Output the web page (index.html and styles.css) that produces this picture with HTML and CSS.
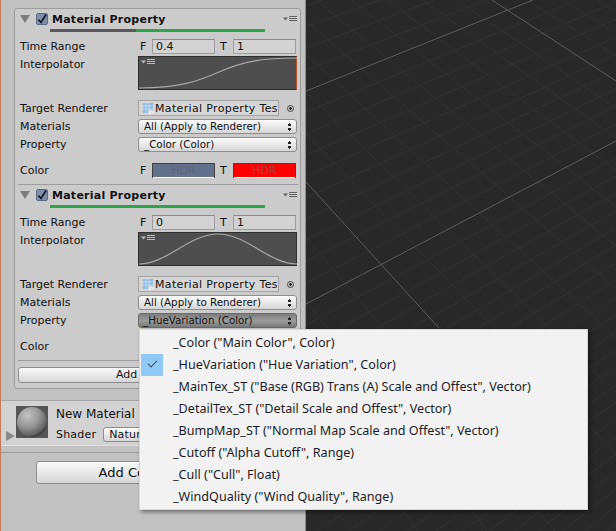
FILE: index.html
```html
<!DOCTYPE html>
<html lang="en">

<head>
    <title>Material Property</title>
    <meta charset="UTF-8">
    <link rel="stylesheet" href="styles.css">
</head>

<body>
    <div class="app">
        <aside class="inspector">
            <div class="card">
                <section class="effect">
                    <div class="effect-head">
                        <svg class="fold" width="10" height="8" viewBox="0 0 10 8"><path d="M0 0H10L5 8Z" /></svg>
                        <svg class="check" width="12" height="12" viewBox="0 0 12 12"><rect x=".5" y=".5" width="11" height="11" rx="1.5" /><path d="M2.5 6.5L5 9.5L10 1.5" /></svg>
                        <span class="effect-title">Material Property</span>
                        <svg class="menu-icon" width="14" height="6" viewBox="0 0 14 6"><path class="menu-tri" d="M0 1.5H5L2.500 4.500Z" /><path class="menu-lines" d="M6 .5H14M6 2.500H14M6 4.500H14" /></svg>
                    </div>
                    <div class="bar"><span class="bar-dark"></span><span class="bar-green"></span></div>
                    <div class="row">
                        <span class="label">Time Range</span>
                        <div class="pair">
                            <span class="pair-key">F</span><span class="num">0.4</span>
                            <span class="pair-key">T</span><span class="num">1</span>
                        </div>
                    </div>
                    <div class="row row-curve">
                        <span class="label">Interpolator</span>
                        <div class="curve curve-edge">
                            <svg class="menu-icon curve-menu" width="14" height="6" viewBox="0 0 14 6"><path class="menu-tri" d="M0 1.500H5L2.500 4.500Z" /><path class="menu-lines" d="M6 .5H14M6 2.500H14M6 4.500H14" /></svg>
                            <svg class="curve-line" width="158" height="32" viewBox="0 0 158 32"><path d="M0 31C40 31 60 24 80 15C105 4 125 1 158 1" /></svg>
                        </div>
                    </div>
                    <div class="row row-target">
                        <span class="label">Target Renderer</span>
                        <div class="object-field">
                            <svg class="object-icon" width="11" height="11" viewBox="0 0 11 11"><rect width="10" height="10" fill="#8ab8e4" /><path d="M3 0V10M6 0V10M0 3H10M0 6H10" stroke="#c4dcf2" /><ellipse cx="8" cy="9" rx="3" ry="2" fill="#e8e8e8" /></svg>
                            <span class="object-name">Material Property Test</span>
                        </div>
                        <span class="target"></span>
                    </div>
                    <div class="row">
                        <span class="label">Materials</span>
                        <div class="popup"><span>All (Apply to Renderer)</span><span class="arrows"></span></div>
                    </div>
                    <div class="row">
                        <span class="label">Property</span>
                        <div class="popup"><span>_Color (Color)</span><span class="arrows"></span></div>
                    </div>
                    <div class="row row-color">
                        <span class="label">Color</span>
                        <div class="pair">
                            <span class="pair-key">F</span><span class="swatch swatch-blue">HDR</span>
                            <span class="pair-key">T</span><span class="swatch swatch-red">HDR</span>
                        </div>
                    </div>
                </section>

                <section class="effect">
                    <div class="effect-head">
                        <svg class="fold" width="10" height="8" viewBox="0 0 10 8"><path d="M0 0H10L5 8Z" /></svg>
                        <svg class="check" width="12" height="12" viewBox="0 0 12 12"><rect x=".5" y=".5" width="11" height="11" rx="1.5" /><path d="M2.500 6.500L5 9.500L10 1.500" /></svg>
                        <span class="effect-title">Material Property</span>
                        <svg class="menu-icon" width="14" height="6" viewBox="0 0 14 6"><path class="menu-tri" d="M0 1.500H5L2.500 4.500Z" /><path class="menu-lines" d="M6 .5H14M6 2.500H14M6 4.500H14" /></svg>
                    </div>
                    <div class="bar"><span class="bar-green bar-full"></span></div>
                    <div class="row">
                        <span class="label">Time Range</span>
                        <div class="pair">
                            <span class="pair-key">F</span><span class="num">0</span>
                            <span class="pair-key">T</span><span class="num">1</span>
                        </div>
                    </div>
                    <div class="row row-curve">
                        <span class="label">Interpolator</span>
                        <div class="curve">
                            <svg class="menu-icon curve-menu" width="14" height="6" viewBox="0 0 14 6"><path class="menu-tri" d="M0 1.500H5L2.500 4.500Z" /><path class="menu-lines" d="M6 .5H14M6 2.500H14M6 4.500H14" /></svg>
                            <svg class="curve-line" width="158" height="32" viewBox="0 0 158 32"><path d="M0 31C28 31 50 1 79 1C108 1 130 31 158 31" /></svg>
                        </div>
                    </div>
                    <div class="row row-target">
                        <span class="label">Target Renderer</span>
                        <div class="object-field">
                            <svg class="object-icon" width="11" height="11" viewBox="0 0 11 11"><rect width="10" height="10" fill="#8ab8e4" /><path d="M3 0V10M6 0V10M0 3H10M0 6H10" stroke="#c4dcf2" /><ellipse cx="8" cy="9" rx="3" ry="2" fill="#e8e8e8" /></svg>
                            <span class="object-name">Material Property Test</span>
                        </div>
                        <span class="target"></span>
                    </div>
                    <div class="row">
                        <span class="label">Materials</span>
                        <div class="popup"><span>All (Apply to Renderer)</span><span class="arrows"></span></div>
                    </div>
                    <div class="row">
                        <span class="label">Property</span>
                        <div class="popup popup-open"><span>_HueVariation (Color)</span><span class="arrows"></span></div>
                    </div>
                    <div class="row row-color">
                        <span class="label">Color</span>
                    </div>
                </section>

                <div class="add-row"><div class="add-btn">Add</div></div>
            </div>

            <div class="material">
                <div class="preview"><span class="sphere"></span></div>
                <svg class="material-fold" width="9" height="10" viewBox="0 0 9 10"><path d="M0 0L9 5L0 10Z" /></svg>
                <div class="material-info">
                    <span class="material-name">New Material</span>
                    <div class="shader"><span>Shader</span><span class="shader-popup">Natur</span></div>
                </div>
            </div>
            <div class="inspector-rule"></div>
            <div class="add-component">Add Component</div>
        </aside>

        <main class="scene">
            <svg width="310" height="531" viewBox="306 0 310 531">
                <path class="grid-minor" d="M306 6L616 -103M306 27L616 -85M306 48L616 -68M306 70L616 -50M306 112L616 -16M306 134L616 2M306 155L616 19M306 176L616 37M306 198L616 54M306 219L616 71M306 240L616 89M306 261L616 106M306 283L616 124M306 325L616 158M306 347L616 176M306 368L616 193M306 389L616 211M306 411L616 228M306 432L616 245M306 453L616 263M306 474L616 280M306 496L616 298M306 517L616 315M306 538L616 332M306 560L616 350M306 581L616 367M306 602L616 385M306 624L616 402M306 645L616 419M306 666L616 437M306 688L616 454M306 709L616 471M306 730L616 489M306 752L616 506M306 773L616 524" />
                <path class="grid-minor" d="M0 0L350 531M35 0L418 531M70 0L487 531M105 0L555 531M176 0L691 531M211 0L759 531M246 0L828 531M282 0L896 531M316 0L964 531M351 0L1032 531M387 0L1100 531M422 0L1169 531M457 0L1237 531M527 0L1373 531M562 0L1441 531M597 0L1510 531" />
                <path class="grid-major" d="M306 91L533 0M306 304L616 141M492 0L616 81M306 182L439 328" />
            </svg>
        </main>
    </div>

    <ul class="dropdown">
        <li>_Color ("Main Color", Color)</li>
        <li class="is-current">_HueVariation ("Hue Variation", Color)</li>
        <li>_MainTex_ST ("Base (RGB) Trans (A) Scale and Offest", Vector)</li>
        <li>_DetailTex_ST ("Detail Scale and Offest", Vector)</li>
        <li>_BumpMap_ST ("Normal Map Scale and Offest", Vector)</li>
        <li>_Cutoff ("Alpha Cutoff", Range)</li>
        <li>_Cull ("Cull", Float)</li>
        <li>_WindQuality ("Wind Quality", Range)</li>
    </ul>
</body>

</html>
```

FILE: styles.css
```css
body {
    margin: 0;
    color: #111;
    font-family: "DejaVu Sans", sans-serif;
    font-size: 11px;
    overflow: hidden;
}

.app {
    display: flex;
    height: 531px;
}

.inspector {
    box-sizing: border-box;
    width: 306px;
    padding: 8px 0 0 0;
    background: #c2c2c2;
    border-left: 1px solid #c8795a;
    border-right: 1px solid #c8795a;
}

.scene {
    flex: 1;
    background: #282828;
    overflow: hidden;
}

.scene svg {
    display: block;
}

.grid-minor {
    fill: none;
    stroke: #313131;
}

.grid-major {
    fill: none;
    stroke: #5c5c5c;
}

.card {
    box-sizing: border-box;
    width: 287px;
    height: 381px;
    margin-left: 13px;
    padding: 0 2px 0 3px;
    background: #cbcbcb;
    border: 1px solid #9c9c9c;
    border-radius: 3px;
}

.effect {
    height: 175px;
    border-bottom: 1px solid #9c9c9c;
}

.effect-head {
    display: flex;
    align-items: center;
    height: 20px;
}

.fold {
    margin-left: 2px;
    fill: #7c7c7c;
}

.check {
    margin-left: 6px;
    fill: #7f90ad;
    stroke: #5d6a80;
}

.check path {
    fill: none;
    stroke: #0c1020;
    stroke-width: 1.6;
}

.effect-title {
    margin-left: 4px;
    font-weight: bold;
    letter-spacing: .25px;
}

.menu-icon {
    margin-left: auto;
    margin-right: 1px;
}

.menu-tri {
    fill: #666;
}

.menu-lines {
    fill: none;
    stroke: #666;
}

.bar {
    display: flex;
    width: 215px;
    height: 3px;
    margin: 0 0 5px 32px;
}

.bar-dark {
    width: 86px;
    background: #58585c;
}

.bar-green {
    flex: 1;
    background: #2ca64a;
}

.row {
    display: flex;
    align-items: center;
    height: 18px;
}

.row-curve {
    align-items: flex-start;
    height: 34px;
    margin-top: 1px;
}

.row-curve .label {
    line-height: 18px;
}

.row-target {
    margin-top: 9px;
}

.row-color {
    margin-top: 8px;
}

.label {
    flex: none;
    width: 120px;
    padding-left: 2px;
    box-sizing: border-box;
}

.pair {
    display: flex;
    align-items: center;
    flex: 1;
}

.pair-key {
    width: 14px;
    padding-left: 2px;
    box-sizing: border-box;
}

.pair-key:nth-child(3) {
    width: 18px;
    padding-left: 5px;
}

.num {
    box-sizing: border-box;
    width: 63px;
    height: 15px;
    padding-left: 3px;
    line-height: 13px;
    background: #d2d2d2;
    border: 1px solid #9e9e9e;
    border-top-color: #8a8a8a;
}

.curve {
    position: relative;
    box-sizing: border-box;
    width: 159px;
    height: 34px;
    background: #4e4e4e;
    border: 1px solid #2e2e2e;
}

.curve-edge {
    border-right: 1px solid #b5502a;
}

.curve-menu {
    position: absolute;
    top: 2px;
    left: 2px;
}

.curve-menu .menu-tri {
    fill: #bbb;
}

.curve-menu .menu-lines {
    stroke: #bbb;
}

.curve-line {
    position: absolute;
    left: 0;
    top: 0;
}

.curve-line path {
    fill: none;
    stroke: #a8a8a8;
    stroke-width: 1.2;
}

.object-field {
    display: flex;
    align-items: center;
    box-sizing: border-box;
    width: 141px;
    height: 16px;
    padding: 0 1px 0 4px;
    overflow: hidden;
    background: #d6d6d6;
    border: 1px solid #a4a4a4;
}

.object-icon {
    flex: none;
    margin-right: 1px;
}

.object-name {
    white-space: nowrap;
    overflow: hidden;
    letter-spacing: .35px;
}

.target {
    box-sizing: border-box;
    width: 7px;
    height: 7px;
    margin-left: 8px;
    border: 1px solid #444;
    border-radius: 50%;
    background: radial-gradient(circle, #222 0 1px, transparent 1.5px);
}

.popup {
    display: flex;
    align-items: center;
    justify-content: space-between;
    box-sizing: border-box;
    width: 159px;
    height: 15px;
    padding: 0 4px 0 5px;
    font-size: 10.3px;
    background: linear-gradient(#fbfbfb, #d6d6d6);
    border: 1px solid #8e8e8e;
    border-radius: 3px;
}

.popup-open {
    padding-left: 4px;
    background: linear-gradient(#7c7c7c, #9c9c9c 50%, #787878);
    border-color: #6a6a6a;
}

.arrows {
    position: relative;
    width: 5px;
    height: 9px;
    background:
        linear-gradient(#222, #222) center 1px / 1px 1px no-repeat,
        linear-gradient(#222, #222) center 2px / 3px 2px no-repeat,
        linear-gradient(#222, #222) center 6px / 3px 2px no-repeat,
        linear-gradient(#222, #222) center 8px / 1px 1px no-repeat;
}

.swatch {
    width: 63px;
    height: 15px;
    box-sizing: border-box;
    text-align: center;
    line-height: 14px;
    border: 1px solid #3f3f3f;
    border-bottom: 0;
    box-shadow: inset 0 -1px 0 #fff;
}

.swatch-blue {
    color: #5c6678;
    background: #64718d;
}

.swatch-red {
    color: #b04040;
    background: #f00;
    border-color: #8f2222;
}

.add-row {
    padding: 6px 0 0 0;
}

.add-btn {
    box-sizing: border-box;
    width: 279px;
    height: 16px;
    padding-left: 97px;
    line-height: 14px;
    background: linear-gradient(#fbfbfb, #d6d6d6);
    border: 1px solid #8e8e8e;
    border-radius: 3px;
}

.material {
    position: relative;
    display: flex;
    gap: 8px;
    box-sizing: border-box;
    height: 46px;
    margin-top: 11px;
    padding: 5px 0 0 15px;
    background: #d2d2d2;
    border-top: 1px solid #a8a8a8;
    border-bottom: 1px solid #e0e0e0;
}

.preview {
    display: flex;
    align-items: center;
    justify-content: center;
    width: 32px;
    height: 32px;
    background: #555;
}

.sphere {
    width: 30px;
    height: 30px;
    border-radius: 50%;
    background: radial-gradient(circle at 35% 28%, #c4c4c4, #949494 42%, #626262 68%, #050505 88%);
}

.material-fold {
    position: absolute;
    left: 5px;
    top: 30px;
    fill: #8a8a8a;
}

.material-info {
    display: flex;
    flex-direction: column;
    gap: 5px;
}

.material-name {
    font-size: 12px;
    line-height: 16px;
}

.shader {
    display: flex;
    align-items: center;
    gap: 7px;
    letter-spacing: .2px;
}

.shader-popup {
    box-sizing: border-box;
    width: 200px;
    height: 15px;
    padding-left: 5px;
    line-height: 13px;
    background: linear-gradient(#fbfbfb, #d6d6d6);
    border: 1px solid #8e8e8e;
    border-radius: 3px;
}

.inspector-rule {
    height: 1px;
    margin-top: 6px;
    background: #9c9c9c;
}

.add-component {
    box-sizing: border-box;
    width: 230px;
    height: 23px;
    margin: 8px 0 0 35px;
    text-align: center;
    font-size: 13px;
    line-height: 21px;
    background: linear-gradient(#fbfbfb, #d6d6d6);
    border: 1px solid #8e8e8e;
    border-radius: 3px;
}

.dropdown {
    position: absolute;
    left: 139px;
    top: 329px;
    box-sizing: border-box;
    width: 449px;
    height: 181px;
    margin: 0;
    padding: 2px 0 0 0;
    list-style: none;
    color: #1c1c28;
    font-family: "Noto Sans", sans-serif;
    font-size: 12.6px;
    background: #f2f2f2;
    border: 1px solid #d8d8d8;
    box-shadow: 2px 2px 4px rgba(0, 0, 0, .45);
}

.dropdown li {
    position: relative;
    height: 22px;
    padding-left: 33px;
    line-height: 21px;
    white-space: nowrap;
}

.is-current::before {
    content: "";
    position: absolute;
    left: 1px;
    top: 0;
    width: 22px;
    height: 22px;
    background: #90c8f8;
}

.is-current::after {
    content: "";
    position: absolute;
    left: 8px;
    top: 6px;
    width: 8px;
    height: 4px;
    border-left: 1.5px solid #3a4a5c;
    border-bottom: 1.5px solid #3a4a5c;
    transform: rotate(-45deg);
}
```
